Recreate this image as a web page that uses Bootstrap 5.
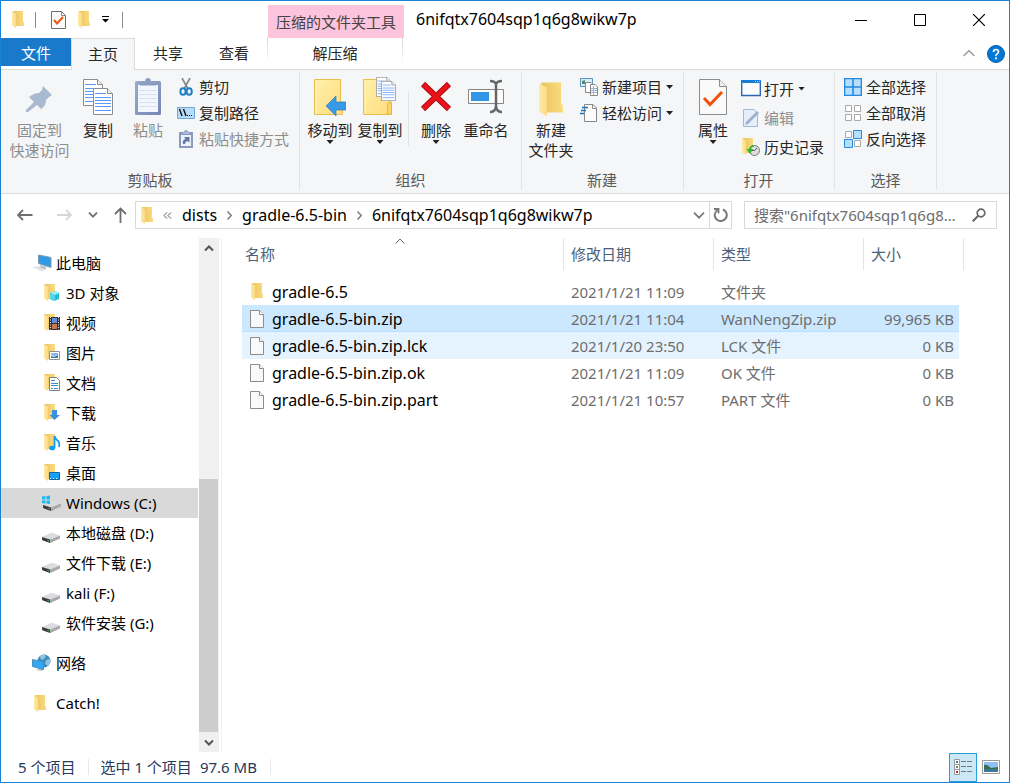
<!DOCTYPE html>
<html lang="zh-CN">
<head>
<meta charset="utf-8">
<meta name="viewport" content="width=device-width, initial-scale=1">
<title>6nifqtx7604sqp1q6g8wikw7p</title>
<link href="https://cdn.jsdelivr.net/npm/bootstrap@5.3.0/dist/css/bootstrap.min.css" rel="stylesheet">
<style>
body{font-family:"Noto Sans","Noto Sans CJK SC",sans-serif;font-size:15px;line-height:20px;color:#000;background:#fff}
svg{display:block;flex:none}
button,.navlink{border:0;background:none;padding:0;color:inherit;text-decoration:none;font:inherit}
.explorer{border:1px solid #1883d7;min-height:100vh}
.titlebar{height:37px}
.quick{width:267px;padding-left:11px}
.quick .bar{width:1px;height:16px;background:#8c8c8c}
.quick .bar:first-of-type{margin:0 15px 0 11px}
.quick .bar:last-of-type{margin-left:13px}
.ctx{width:136px;height:33px;background:#fdc4de;color:#444;white-space:nowrap}
.window-title,.address,.files td:first-child{font-size:16px}
.window-title{padding-bottom:1px}
.caption-btn{width:59px;height:36px}
.caption-btn:last-child{margin-right:1px}
.tabs{height:32px;border-bottom:1px solid #dadbdc;color:#262626}
.tabs .navlink{text-align:center;line-height:30px}
.tab-file{width:70px;height:28px;background:#1979ca;color:#fff}
.tab-home{width:64px;height:32px;background:#f5f6f7;border:1px solid #dadbdc;border-bottom:0}
.tab-std{width:66px}
.tab-ctx{width:136px;height:24px;border:solid;border-width:0 1px;border-image:linear-gradient(#d0d0d0,#fff) 1}
.ribbon{height:124px;background:#f5f6f7;border-bottom:1px solid #dadbdc;color:#262626;white-space:nowrap}
.rgroup{border-right:1px solid #e2e3e4;margin:2px 0 3px;padding:0 10px 0 5px}
.rgroup .tools{height:98px}
.rlabel{color:#5a5a5a;text-align:center;margin-right:-5px}
.big{width:50px;padding-top:6px;display:flex;flex-direction:column;align-items:center;text-align:center}
.big .pic{height:42px;display:flex;align-items:flex-start;justify-content:center}
.big.wide{width:67px}
.drop{width:7px;height:4px;background:#222;clip-path:polygon(0 0,100% 0,50% 100%)}
.stack{padding:2px 0 0 4px}
.little{display:flex;align-items:center;height:26px;gap:4px}
.little .pic{width:18px;display:flex;justify-content:center}
.roomy .little{height:29px}
.off{color:#8d8d8d}
.split{width:1px;height:55px;background:#e2e3e4;margin:19px 2px 0 3px}
.navrow{height:44px;padding:7px 12px 9px 16px}
.address,.search{height:28px;border:1px solid #d9d9d9}
.address{gap:10px;padding-left:5px;margin:0 12px 0 8px}
.address .navlink{margin-top:-1px}
.refresh{width:22px;height:26px;border-left:1px solid #d9d9d9}
.search{width:253px;padding:0 10px 0 9px}
.search input{border:0;outline:0;padding:0;min-width:0;width:100%;color:#6d6d6d;text-overflow:ellipsis}
.search input::placeholder{color:#6d6d6d}
.side{flex:none;width:197px;padding-top:10px}
.side a{display:flex;align-items:center;height:30px;color:#000;text-decoration:none;padding-left:41px;gap:4px;white-space:nowrap}
.side a.root{padding-left:31px}
.side .pic{width:20px}
.side .apart{margin-top:10px}
.side .active{background:#d9d9d9}
.scroller{flex:none;width:20px;background:#f0f0f0;margin-left:1px}
.scroller button{height:20px;padding-right:1px}
.above{flex:221}
.thumb{flex:254;background:#cdcdcd;margin-right:1px}
.files{border-left:1px solid #f2f2f2;margin-left:2px;padding:0 50px 0 20px}
.files table{width:100%;table-layout:fixed;border-collapse:separate;border-spacing:0}
.files th{height:32px;font-weight:400;color:#4c607a;padding:0 0 0 7px;border-left:1px solid #e5e5e5;position:relative}
.files th:first-child{border:0;padding-left:3px}
.files th:last-child::after{content:"";position:absolute;right:-5px;top:0;height:32px;width:1px;background:#e5e5e5}
.sorted{position:absolute;left:50%;top:0;margin-left:-7px}
.files td{height:27px;padding:0 0 0 8px;color:#6d6d6d;white-space:nowrap}
.files tr.gap td{height:8px}
.files td:first-child{color:#000}
.files td:last-child{text-align:right;padding-right:5px}
.files .pic{width:14px;display:flex;justify-content:center}
.chosen td{background:#cce8ff;box-shadow:inset 0 -1px #b8dfff}
.hover td{background:#e5f3ff}
.c-date,.c-type{width:150px}.c-size{width:96px}
.status{height:30px;color:#26395c;padding-left:17px}
.status .bar{width:1px;height:16px;background:#e8e8e8;margin:0 11px 0 13px}
.view{width:28px;height:29px;display:flex;align-items:center;justify-content:center}
.view.on{background:#cce8f6;border:1px solid #26a0da}
</style>
</head>
<body>
<svg width="0" height="0" class="position-absolute" aria-hidden="true">
<defs>
<linearGradient id="gBack"><stop offset="0" stop-color="#eac35c"/><stop offset="1" stop-color="#fbdc82"/></linearGradient>
<linearGradient id="gFront"><stop offset="0" stop-color="#ffeaaa"/><stop offset="1" stop-color="#fbdb84"/></linearGradient>
<linearGradient id="gPane" x1="0" y1="0" x2="1" y2="1"><stop offset="0" stop-color="#fff0a8"/><stop offset="1" stop-color="#ffdc80"/></linearGradient>
<linearGradient id="gClip" x1="0" y1="0" x2="1" y2="1"><stop offset="0" stop-color="#9aabd0"/><stop offset="1" stop-color="#7587b4"/></linearGradient>
<symbol id="folder" viewBox="0 0 12 17"><path d="M1 0H11V10.500L12 11.500V15H3z" fill="url(#gBack)"/><path d="M0 .5L4 2.500V17L0 14.500z" fill="url(#gFront)"/></symbol>
<symbol id="file" viewBox="0 0 14 18"><path d="M.5.5H9.500L13.500 4.500V17.500H.5z" fill="#f8f9fa" stroke="#8c8c8c"/><path d="M9.500.5V4.500H13.500" fill="#fff" stroke="#8c8c8c"/></symbol>
<symbol id="lined" viewBox="0 0 20 27"><path d="M.5.5H14.500L19.500 5.500V26.500H.5z" fill="#fff" stroke="#8c8c8c"/><path d="M14.500.5V5.500H19.500" fill="#eee" stroke="#8c8c8c"/><path d="M2 5.500H13M2 9.500H18M2 12.500H18M2 15.500H18M2 18.500H18M2 22.500H18" stroke="#5c9af5"/></symbol>
<symbol id="drive" viewBox="0 0 18 11"><path d="M0 5L9 1Q10 .5 11 1L18 3.500L8 7.500z" fill="#dcdce0"/><path d="M0 5L8 7.500V11L1 8.500Q0 8 0 7z" fill="#3b3b3d"/><path d="M8 7.500L18 3.500V6.500L9 10.800L8 11z" fill="#a8a8ad"/><path d="M5.500 8.500L7 9" stroke="#3ed14b"/></symbol>
<symbol id="screen" viewBox="0 0 20 18"><path d="M0 13L7 12L15 15L10 17.500z" fill="#dfe3e8"/><path d="M8 11L14 13V15L9 14z" fill="#b8bec5"/><path d="M6.500 1L19 3.500V13.500L6.500 9.500z" fill="#2f9be8" stroke="#7e99ad"/></symbol>
<symbol id="fside" viewBox="0 0 12 17"><path d="M0 0H11V15H3z" fill="url(#gBack)"/><path d="M0 .5L4 2.500V17L0 14.500z" fill="url(#gFront)"/></symbol>
</defs></svg>

<div class="explorer d-flex flex-column">
<header class="titlebar d-flex align-items-center">
  <div class="quick d-flex align-items-center">
    <svg width="12" height="17"><use href="#folder"/></svg>
    <span class="bar"></span>
    <button aria-label="属性" type="button"><svg width="15" height="18" viewBox="0 0 15 18"><path d="M.5.5H10.500L14.500 4.500V17.500H.5z" fill="#fafafa" stroke="#6e6e6e"/><path d="M10.500.5V4.500H14.500" fill="none" stroke="#8c8c8c"/><path d="M3 9L6 12.500L12 6" fill="none" stroke="#f0530f" stroke-width="2"/></svg></button>
    <button class="ms-2 ps-1" aria-label="新建文件夹" type="button"><svg width="12" height="17"><use href="#folder"/></svg></button>
    <button class="ms-2 ps-1" aria-label="自定义快速访问工具栏" type="button"><svg width="7" height="7" viewBox="0 0 7 7"><path d="M0 .5H7" stroke="#000"/><path d="M0 3H7L3.500 6.500z"/></svg></button>
    <span class="bar"></span>
  </div>
  <div class="ctx align-self-end d-flex align-items-center justify-content-center">压缩的文件夹工具</div>
  <div class="window-title flex-grow-1 ps-2 ms-1 text-truncate">6nifqtx7604sqp1q6g8wikw7p</div>
  <button class="caption-btn" aria-label="最小化" type="button"><svg class="mx-auto" width="12" height="12" viewBox="0 0 12 12"><path d="M0 6.500H12" stroke="#000"/></svg></button>
  <button class="caption-btn" aria-label="最大化" type="button"><svg class="mx-auto" width="12" height="12" viewBox="0 0 12 12"><path d="M.5.5H11.500V11.500H.5z" fill="none" stroke="#000"/></svg></button>
  <button class="caption-btn" aria-label="关闭" type="button"><svg class="mx-auto" width="12" height="12" viewBox="0 0 12 12"><path d="M0 0L12 12M12 0L0 12" stroke="#000" stroke-width="1.200"/></svg></button>
</header>
<nav class="tabs d-flex align-items-start">
  <a href="#" class="navlink tab-file">文件</a>
  <a href="#" class="navlink tab-home">主页</a>
  <a href="#" class="navlink tab-std">共享</a>
  <a href="#" class="navlink tab-std">查看</a>
  <a href="#" class="navlink tab-ctx">解压缩</a>
  <button class="ms-auto align-self-center" aria-label="收起功能区" type="button"><svg width="12" height="7" viewBox="0 0 12 7"><path d="M.5 6L6 .7L11.500 6" fill="none" stroke="#9c9c9c" stroke-width="1.500"/></svg></button>
  <button class="align-self-center ms-2 me-1 ps-1" aria-label="帮助" type="button"><svg width="18" height="18" viewBox="0 0 18 18"><circle cx="9" cy="9" r="8.500" fill="#0078d7" stroke="#0a5fa8"/><path d="M6.500 7Q6.500 4.500 9 4.500T11.500 6.800Q11.500 8 10 9T9 11" fill="none" stroke="#fff" stroke-width="1.700"/><circle cx="9" cy="13.300" r="1.100" fill="#fff"/></svg></button>
</nav>

<section class="ribbon d-flex">
  <div class="rgroup">
    <div class="tools d-flex align-items-start">
      <button type="button" class="big wide off"><span class="pic"><svg class="mt-2" width="27" height="27" viewBox="0 0 27 27"><path d="M17 0L26 9L23 11L20 14Q20 20 15 23L11 19L2 26H0V24L8 16L3 11Q8 7 13 7L16 4z" fill="#a9b9d0"/></svg></span>固定到<br>快速访问</button>
      <button type="button" class="big"><span class="pic"><svg width="31" height="37" viewBox="0 0 31 37"><use href="#lined" y="1" width="20" height="27"/><use href="#lined" x="10" y="10" width="20" height="27"/></svg></span>复制</button>
      <button type="button" class="big off"><span class="pic"><svg width="26" height="37" viewBox="0 0 26 37"><rect y="3" width="26" height="34" rx="1.500" fill="url(#gClip)"/><path d="M3 7H23V34H3z" fill="#f3f7fd"/><path d="M4 12.500H22M4 16.500H22M4 20.500H22M4 24.500H22M4 28.500H22" stroke="#d5e2f3"/><path d="M5 7.500V4H10Q10 0 13 0T16 4H21V7.500z" fill="#8c9dc2"/></svg></span>粘贴</button>
      <div class="stack">
        <button type="button" class="little"><span class="pic"><svg width="14" height="18" viewBox="0 0 14 18"><path d="M3 0L9 11M11 0L5 11" stroke="#848484" stroke-width="1.600"/><ellipse cx="4" cy="13.500" rx="2.600" ry="3.300" fill="none" stroke="#1c82c4" stroke-width="2"/><ellipse cx="10.200" cy="13.500" rx="2.600" ry="3.300" fill="none" stroke="#1c82c4" stroke-width="2"/></svg></span>剪切</button>
        <button type="button" class="little"><span class="pic"><svg width="18" height="12" viewBox="0 0 18 12"><path d="M.5.5H17.500V11.500H.5z" fill="#b5ddfa" stroke="#6ea8d2"/><path d="M2.500 2L5 9M6.500 2L9 9" stroke="#111" stroke-width="1.400"/><path d="M10 8.500H16" stroke="#111" stroke-dasharray="1 1"/></svg></span>复制路径</button>
        <button type="button" class="little off"><span class="pic"><svg width="14" height="18" viewBox="0 0 14 18"><path d="M0 2H4L7 0L10 2H14V18H0z" fill="#8b9bc0"/><path d="M2 5H12V16H2z" fill="#edf2fa"/><path d="M4 3H10" stroke="#d4dbe9"/><path d="M4 14Q3 10 6.500 9L5 7H10.500V12.500L8.500 11Q6 11.500 6 14z" fill="#6479a8"/></svg></span>粘贴快捷方式</button>
      </div>
    </div>
    <div class="rlabel">剪贴板</div>
  </div>
  <div class="rgroup">
    <div class="tools d-flex align-items-start">
      <button type="button" class="big"><span class="pic"><svg width="32" height="38" viewBox="0 0 32 38"><path d="M.5 1.500H26.500V24H28.500V36.500H.5z" fill="url(#gPane)" stroke="#e5c14a"/><path d="M2.500 2V36" stroke="#fff1b8"/><path d="M12 28L22 18V24H32V32H22V38z" fill="#399ae6" stroke="#3180bd" stroke-width=".7"/></svg></span>移动到<span class="drop"></span></button>
      <button type="button" class="big"><span class="pic"><svg class="overflow-visible" width="34" height="38" viewBox="0 0 34 38"><path d="M.5 1.500H26.500V24H28.500V36.500H.5z" fill="url(#gPane)" stroke="#e5c14a"/><path d="M2.500 2V36" stroke="#fff1b8"/><path d="M24.500 36V26Q26.500 22 28.500 26V36z" fill="#fbd564" stroke="#e5b93c"/><use href="#lined" x="13" y="-1" width="15" height="20"/><use href="#lined" x="18" y="3" width="15" height="20"/></svg></span>复制到<span class="drop"></span></button>
      <span class="split"></span>
      <button type="button" class="big"><span class="pic"><svg width="32" height="36" viewBox="0 0 32 36"><path d="M3 6L29 31M29 6L3 31" stroke="#b00d14" stroke-width="6"/><path d="M3.500 6.500L28.500 30.500M28.500 6.500L3.500 30.500" stroke="#e8121b" stroke-width="4.200"/></svg></span>删除<span class="drop"></span></button>
      <button type="button" class="big"><span class="pic"><svg width="36" height="36" viewBox="0 0 36 36"><path d="M.5 11.500H35.500V25.500H.5z" fill="#fdfdfd" stroke="#868686"/><path d="M3 14H21V23H3z" fill="#3195e8"/><path d="M22 3Q27 3 28 6Q29 3 34 3M28 5V31M22 34Q27 34 28 29Q29 34 34 34" fill="none" stroke="#666" stroke-width="2.500"/></svg></span>重命名</button>
    </div>
    <div class="rlabel">组织</div>
  </div>
  <div class="rgroup ps-1">
    <div class="tools d-flex align-items-start">
      <button type="button" class="big"><span class="pic"><svg class="mt-1" width="24" height="35"><use href="#folder"/></svg></span>新建<br>文件夹</button>
      <div class="stack">
        <button type="button" class="little"><span class="pic"><svg width="18" height="18" viewBox="0 0 18 18"><path d="M.5.5H12.500V8.500H.5z" fill="#d5eefb" stroke="#5895b8"/><path d="M2 3L5 2V6H2z" fill="#518b76"/><path d="M5.500 4.500H11L13.500 7V14.500H5.500z" fill="#fff" stroke="#888"/><path d="M10.500 6.500H15L17.500 9V17.500H10.500z" fill="#fff" stroke="#888"/><path d="M11 10.500H17M11 12.500H17M11 14.500H17" stroke="#9bb7d4"/><path d="M13.500 8V17" stroke="#dc9999"/></svg></span>新建项目<span class="drop"></span></button>
        <button type="button" class="little"><span class="pic"><svg width="18" height="18" viewBox="0 0 18 18"><path d="M4.500.5H13L16.500 4V17.500H4.500z" fill="#fcfcfc" stroke="#888"/><path d="M12.500.5V4.500H16.500" fill="none" stroke="#888"/><path d="M2 3.500H8M1 6.500H6M0 9.500H4" stroke="#1775bd" stroke-width="1.400"/></svg></span>轻松访问<span class="drop"></span></button>
      </div>
    </div>
    <div class="rlabel">新建</div>
  </div>
  <div class="rgroup ps-1">
    <div class="tools d-flex align-items-start">
      <button type="button" class="big"><span class="pic"><svg width="28" height="37" viewBox="0 0 28 37"><path d="M.5 1.500H20.500L27.500 8.500V36.500H.5z" fill="#fafafa" stroke="#8c8c8c"/><path d="M20.500 1.500V8.500H27.500" fill="#eee" stroke="#8c8c8c"/><path d="M5 20L11 26.500L23 14" fill="none" stroke="#f2520c" stroke-width="3"/></svg></span>属性<span class="drop"></span></button>
      <div class="stack roomy">
        <button type="button" class="little"><span class="pic"><svg width="20" height="17" viewBox="0 0 20 17"><path d="M.7.7H19.300V15.500H.7z" fill="#f9fbfd" stroke="#2f66b3" stroke-width="1.400"/><path d="M0 0H20V3H0z" fill="#157bd5"/><path d="M14 1.500H19" stroke="#9fd0f7" stroke-dasharray="1 1"/></svg></span>打开<span class="drop"></span></button>
        <button type="button" class="little off"><span class="pic"><svg width="16" height="18" viewBox="0 0 16 18"><path d="M.5.5H11L14.500 4V17.500H.5z" fill="#e6eefa" stroke="#a3b7d6"/><path d="M16 4L5 15L2 16L3 13L14 2z" fill="#9dafd0"/></svg></span>编辑</button>
        <button type="button" class="little"><span class="pic"><svg width="18" height="18" viewBox="0 0 18 18"><use href="#folder" width="12" height="17"/><circle cx="12.500" cy="12.500" r="5" fill="#ddd" stroke="#777"/><path d="M12.500 12.500L15 10M12.500 12.500H10" stroke="#555"/><path d="M12 7Q8 7 7 11H4.500L8 16L11 11H9Q10 8 12 9z" fill="#2bb832"/></svg></span>历史记录</button>
      </div>
    </div>
    <div class="rlabel">打开</div>
  </div>
  <div class="rgroup">
    <div class="tools stack">
      <button type="button" class="little"><span class="pic"><svg width="18" height="18" viewBox="0 0 18 18"><path d="M.5.5H17.500V17.500H.5zM9 0V18M0 9H18" fill="#b5dffb" stroke="#2389df" stroke-width="1.600"/></svg></span>全部选择</button>
      <button type="button" class="little"><span class="pic"><svg width="16" height="16" viewBox="0 0 16 16"><path d="M.5.5H6.500V6.500H.5zM9.500.5H15.500V6.500H9.500zM.5 9.500H6.500V15.500H.5zM9.500 9.500H15.500V15.500H9.500z" fill="#fff" stroke="#a9a9a9"/></svg></span>全部取消</button>
      <button type="button" class="little"><span class="pic"><svg width="18" height="18" viewBox="0 0 18 18"><path d="M1.500 1.500H7.500V7.500H1.500zM10.500 10.500H16.500V16.500H10.500z" fill="#fff" stroke="#a9a9a9"/><path d="M9.500.5H17.500V8.500H9.500zM.5 9.500H8.500V17.500H.5z" fill="#b5dffb" stroke="#2389df"/></svg></span>反向选择</button>
    </div>
    <div class="rlabel">选择</div>
  </div>
</section>

<div class="navrow d-flex align-items-center">
  <button aria-label="后退" type="button"><svg width="16" height="12" viewBox="0 0 16 12"><path d="M15.500 6H1M6 1L1 6L6 11" fill="none" stroke="#6e6e6e" stroke-width="1.800"/></svg></button>
  <button class="ms-4" aria-label="前进" type="button"><svg width="15" height="12" viewBox="0 0 15 12"><path d="M0 6H14M9 1L14 6L9 11" fill="none" stroke="#d6d6d6" stroke-width="1.800"/></svg></button>
  <button class="ms-3" aria-label="最近浏览的位置" type="button"><svg width="10" height="6" viewBox="0 0 10 6"><path d="M1 .7L5 4.700L9 .7" fill="none" stroke="#707070" stroke-width="1.800"/></svg></button>
  <button class="ms-3" aria-label="向上" type="button"><svg width="13" height="16" viewBox="0 0 13 16"><path d="M6.500 16V1.500M1 7L6.500 1.500L12 7" fill="none" stroke="#6e6e6e" stroke-width="1.800"/></svg></button>
  <div class="address d-flex align-items-center flex-grow-1">
    <svg width="12" height="17"><use href="#folder"/></svg>
    <svg width="9" height="7" viewBox="0 0 9 7"><path d="M4 .5L1 3.500L4 6.500M8 .5L5 3.500L8 6.500" fill="none" stroke="#555"/></svg>
    <a class="navlink" href="#">dists</a>
    <svg width="5" height="9" viewBox="0 0 5 9"><path d="M.5.5L4.300 4.500L.5 8.500" fill="none" stroke="#777" stroke-width="1.500"/></svg>
    <a class="navlink" href="#">gradle-6.5-bin</a>
    <svg width="5" height="9" viewBox="0 0 5 9"><path d="M.5.5L4.300 4.500L.5 8.500" fill="none" stroke="#777" stroke-width="1.500"/></svg>
    <a class="navlink" href="#">6nifqtx7604sqp1q6g8wikw7p</a>
    <div class="ms-auto d-flex align-items-center">
      <button class="me-1" aria-label="以前的位置" type="button"><svg width="12" height="7" viewBox="0 0 12 7"><path d="M1 .7L6 5.700L11 .7" fill="none" stroke="#777" stroke-width="1.700"/></svg></button>
      <button class="refresh" aria-label="刷新" type="button"><svg class="mx-auto" width="15" height="16" viewBox="0 0 15 16"><path d="M10 2.500A6 6 0 1 1 4.500 3" fill="none" stroke="#777" stroke-width="2"/><path d="M1 2H5.500V6.500" fill="none" stroke="#777" stroke-width="1.800"/></svg></button>
    </div>
  </div>
  <div class="search d-flex align-items-center">
    <input type="text" aria-label="搜索" placeholder="搜索&quot;6nifqtx7604sqp1q6g8wikw7p&quot;">
    <svg class="ms-2" width="14" height="14" viewBox="0 0 14 14"><circle cx="9" cy="5" r="3.800" fill="none" stroke="#666" stroke-width="1.700"/><path d="M6.300 7.700L.7 13.300" stroke="#666" stroke-width="2"/></svg>
  </div>
</div>

<main class="d-flex flex-grow-1">
  <nav class="side">
    <a class="root" href="#"><span class="pic"><svg width="20" height="18"><use href="#screen"/></svg></span>此电脑</a>
    <a href="#"><span class="pic"><svg width="18" height="18" viewBox="0 0 18 18"><use href="#fside" x="2" width="12" height="17"/><path d="M8 9L13 7L17 9V15L12 17L8 15z" fill="#25bcd4"/><path d="M8 9L13 7L17 9L13 11z" fill="#a4effa"/><path d="M8 9L13 11V17L8 15z" fill="#53d6e8"/></svg></span>3D 对象</a>
    <a href="#"><span class="pic"><svg width="18" height="18" viewBox="0 0 18 18"><use href="#fside" x="2" width="12" height="17"/><path d="M7 3H18V16H7z" fill="#333"/><path d="M10 4H15V9H10z" fill="#648dd8"/><path d="M10 10H15V15H10z" fill="#c9774d"/><path d="M8.500 3V16M16.500 3V16" stroke="#eee" stroke-dasharray="1 1.500"/></svg></span>视频</a>
    <a href="#"><span class="pic"><svg width="18" height="18" viewBox="0 0 18 18"><use href="#fside" x="2" width="12" height="17"/><path d="M7.500 7.500H17.500V15.500H7.500z" fill="#fff" stroke="#8c9299"/><path d="M9 9H16V11Q12 13 9 11z" fill="#87b6f2"/><path d="M9 14V12Q12 14 16 11V14z" fill="#3b7d99"/></svg></span>图片</a>
    <a href="#"><span class="pic"><svg width="18" height="18" viewBox="0 0 18 18"><use href="#fside" x="2" width="12" height="17"/><path d="M7.500 3.500H14.500L17.500 6.500V16.500H7.500z" fill="#fff" stroke="#7b8087"/><path d="M9 6.500H13M9 9.500H16M9 11.500H16M9 14.500H11M12 14.500H16" stroke="#3c8cc5"/></svg></span>文档</a>
    <a href="#"><span class="pic"><svg width="18" height="18" viewBox="0 0 18 18"><use href="#fside" x="2" width="12" height="17"/><path d="M10 6H15V11H18L12.500 16L7.500 11H10z" fill="#3890df"/></svg></span>下载</a>
    <a href="#"><span class="pic"><svg width="18" height="18" viewBox="0 0 18 18"><use href="#fside" x="2" width="12" height="17"/><ellipse cx="10.200" cy="14" rx="3" ry="2.300" fill="#0c9df2"/><path d="M12.500 14V2Q13 5 16 7Q18 9 17 13" fill="none" stroke="#0c9df2" stroke-width="1.800"/></svg></span>音乐</a>
    <a href="#"><span class="pic"><svg width="18" height="18" viewBox="0 0 18 18"><use href="#fside" x="2" width="12" height="17"/><path d="M7.500 8.500H17.500V15.500H7.500z" fill="#14a0f8" stroke="#0868a8"/><path d="M8 14.500H17" stroke="#fff" stroke-dasharray="1 2"/></svg></span>桌面</a>
    <a href="#" class="active"><span class="pic"><svg width="19" height="16" viewBox="0 0 19 16"><use href="#drive" x="1" y="5" width="18" height="11"/><path d="M0 1.500L3.500 1V4.500H0zM4.500 1L8 .5V4.500H4.500zM0 5.500H3.500V8.500L0 8zM4.500 5.500H8V9L4.500 8.500z" fill="#18bbf2"/></svg></span>Windows (C:)</a>
    <a href="#"><span class="pic"><svg class="mt-2" width="18" height="11"><use href="#drive"/></svg></span>本地磁盘 (D:)</a>
    <a href="#"><span class="pic"><svg class="mt-2" width="18" height="11"><use href="#drive"/></svg></span>文件下载 (E:)</a>
    <a href="#"><span class="pic"><svg class="mt-2" width="18" height="11"><use href="#drive"/></svg></span>kali (F:)</a>
    <a href="#"><span class="pic"><svg class="mt-2" width="18" height="11"><use href="#drive"/></svg></span>软件安装 (G:)</a>
    <a href="#" class="root apart"><span class="pic"><svg width="19" height="18" viewBox="0 0 19 18"><circle cx="12" cy="7" r="6.500" fill="#3c8cbc"/><path d="M8 2Q12-1 14 2L12 5L9 6zM14 6L18 5Q19 9 16 12L13 10z" fill="#8fc4de"/><path d="M4 16L10 17L12 15L8 14z" fill="#bcc3ca"/><path d="M.5 5.500L11.500 8V15.500L.5 12.500z" fill="#35a7f7" stroke="#4b8eb9"/></svg></span>网络</a>
    <a href="#" class="root apart"><span class="pic"><svg width="14" height="17" viewBox="0 0 14 17"><use href="#folder" x="2" width="12" height="17"/></svg></span>Catch!</a>
  </nav>
  <div class="scroller d-flex flex-column">
    <button aria-label="向上滚动" type="button"><svg class="mx-auto" width="10" height="7" viewBox="0 0 10 7"><path d="M1 5.500L5 1.500L9 5.500" fill="none" stroke="#555" stroke-width="2"/></svg></button>
    <div class="above"></div><div class="thumb"></div>
    <button aria-label="向下滚动" type="button"><svg class="mx-auto" width="10" height="7" viewBox="0 0 10 7"><path d="M1 1.500L5 5.500L9 1.500" fill="none" stroke="#555" stroke-width="2"/></svg></button>
  </div>
  <section class="files flex-grow-1">
    <table>
      <colgroup><col><col class="c-date"><col class="c-type"><col class="c-size"></colgroup>
      <thead><tr><th scope="col">名称<svg class="sorted" width="10" height="7" viewBox="0 0 10 7"><path d="M.5 5.500L5 1L9.500 5.500" fill="none" stroke="#666"/></svg></th><th scope="col">修改日期</th><th scope="col">类型</th><th scope="col">大小</th></tr></thead>
      <tbody>
        <tr class="gap" aria-hidden="true"><td colspan="4"></td></tr>
        <tr><td><div class="d-flex align-items-center gap-2"><span class="pic"><svg width="12" height="17"><use href="#folder"/></svg></span>gradle-6.5</div></td><td>2021/1/21 11:09</td><td>文件夹</td><td></td></tr>
        <tr class="chosen"><td><div class="d-flex align-items-center gap-2"><span class="pic"><svg width="14" height="18"><use href="#file"/></svg></span>gradle-6.5-bin.zip</div></td><td>2021/1/21 11:04</td><td>WanNengZip.zip</td><td>99,965 KB</td></tr>
        <tr class="hover"><td><div class="d-flex align-items-center gap-2"><span class="pic"><svg width="14" height="18"><use href="#file"/></svg></span>gradle-6.5-bin.zip.lck</div></td><td>2021/1/20 23:50</td><td>LCK 文件</td><td>0 KB</td></tr>
        <tr><td><div class="d-flex align-items-center gap-2"><span class="pic"><svg width="14" height="18"><use href="#file"/></svg></span>gradle-6.5-bin.zip.ok</div></td><td>2021/1/21 11:09</td><td>OK 文件</td><td>0 KB</td></tr>
        <tr><td><div class="d-flex align-items-center gap-2"><span class="pic"><svg width="14" height="18"><use href="#file"/></svg></span>gradle-6.5-bin.zip.part</div></td><td>2021/1/21 10:57</td><td>PART 文件</td><td>0 KB</td></tr>
      </tbody>
    </table>
  </section>
</main>
<footer class="status d-flex align-items-center">
  <span>5 个项目</span><span class="bar"></span><span>选中 1 个项目</span><span class="ms-2">97.6 MB</span><span class="bar"></span>
  <button class="view on ms-auto" aria-label="详细信息" type="button"><svg width="18" height="16" viewBox="0 0 18 16"><path d="M.5.5H5.500V5.500H.5zM.5 5.500H5.500V10.500H.5zM.5 10.500H5.500V15.500H.5z" fill="#fff" stroke="#999"/><path d="M2 3H4" stroke="#2f7dae" stroke-width="2"/><path d="M2 8H4" stroke="#698d42" stroke-width="2"/><path d="M2 13H4" stroke="#d3301e" stroke-width="2"/><path d="M7 2.500H12M13 2.500H18M7 7.500H12M13 7.500H18M7 12.500H12M13 12.500H18" stroke="#777"/></svg></button>
  <button class="view me-1" aria-label="大图标" type="button"><svg width="18" height="14" viewBox="0 0 18 14"><path d="M.5.5H17.500V13.500H.5z" fill="#fff" stroke="#999"/><path d="M2 2H16V12H2z" fill="#8fc0f5"/><path d="M2 5Q5 4 9 8L16 7V9H2z" fill="#3c6a4c"/><path d="M2 9H16V12H2z" fill="#3d789b"/></svg></button>
</footer>
</div>
<script src="https://cdn.jsdelivr.net/npm/bootstrap@5.3.0/dist/js/bootstrap.bundle.min.js"></script>
</body>
</html>
